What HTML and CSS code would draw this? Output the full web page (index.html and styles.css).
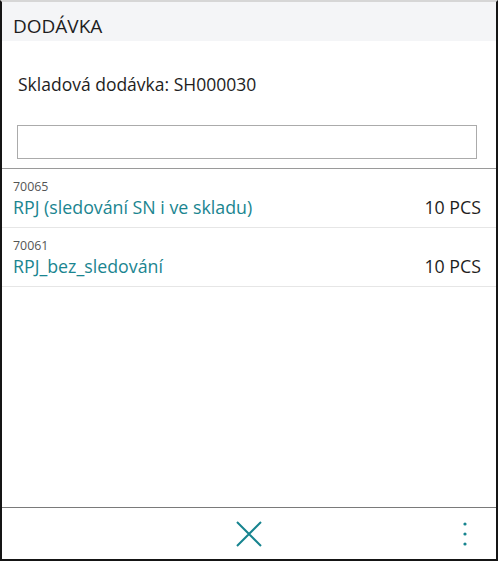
FILE: index.html
```html
<!DOCTYPE html>
<html lang="cs">
<head>
    <meta charset="UTF-8">
    <meta name="viewport" content="width=device-width, initial-scale=1.0">
    <title>Dodávka</title>
    <link rel="stylesheet" href="styles.css">
</head>
<body>
    <div class="frame">
        <!-- Header -->
        <div class="header">DODÁVKA</div>

        <div class="info">Skladová dodávka: SH000030</div>

        <div class="search">
            <input type="text" class="search-input">
        </div>

        <!-- Lines -->
        <div class="lines">
            <div class="line">
                <div class="line-code">70065</div>
                <div class="line-main">
                    <span class="line-name">RPJ (sledování SN i ve skladu)</span>
                    <span class="line-qty">10 PCS</span>
                </div>
            </div>
            <div class="line">
                <div class="line-code">70061</div>
                <div class="line-main">
                    <span class="line-name">RPJ_bez_sledování</span>
                    <span class="line-qty">10 PCS</span>
                </div>
            </div>
        </div>

        <!-- Footer -->
        <div class="footer">
            <button class="icon-btn close-btn" aria-label="Zavřít">
                <svg width="26" height="26" viewBox="0 0 26 26">
                    <path d="M1 1 L25 25 M25 1 L1 25" stroke="#17848f" stroke-width="2" fill="none"/>
                </svg>
            </button>
            <button class="icon-btn more-btn" aria-label="Více">
                <svg width="4" height="24" viewBox="0 0 4 24">
                    <circle cx="2" cy="2" r="1.6" fill="#17848f"/>
                    <circle cx="2" cy="12" r="1.6" fill="#17848f"/>
                    <circle cx="2" cy="22" r="1.6" fill="#17848f"/>
                </svg>
            </button>
        </div>
    </div>
</body>
</html>
```

FILE: styles.css
```css
* {
    margin: 0;
    padding: 0;
    box-sizing: border-box;
}

body {
    font-family: 'Open Sans', sans-serif;
    color: #1e1e1e;
    background: #fff;
}

.frame {
    width: 498px;
    height: 561px;
    border: 2px solid #151515;
    border-top: 2px solid #d6d6d6;
    display: flex;
    flex-direction: column;
}

.header {
    height: 39px;
    background: #f4f5f7;
    padding: 9px 0 0 11px;
    font-size: 19px;
    line-height: 30px;
    color: #1e1e1e;
}

.info {
    margin-top: 31px;
    padding-left: 16px;
    font-size: 17.5px;
    line-height: 24px;
}

.search {
    padding: 29px 19px 9px 15px;
    border-bottom: 1px solid #9a9a9a;
}

.search-input {
    display: block;
    width: 100%;
    height: 34px;
    border: 1px solid #ababab;
    background: #fff;
    outline: none;
}

.lines {
    flex: 1;
}

.line {
    height: 59px;
    padding: 10px 15px 0 11px;
    border-bottom: 1px solid #e6e6e6;
}

.line-code {
    font-size: 12.4px;
    line-height: 16px;
    color: #555;
}

.line-main {
    display: flex;
    justify-content: space-between;
    align-items: center;
    font-size: 17.8px;
    line-height: 25px;
}

.line-name {
    color: #1a8590;
}

.line-qty {
    color: #1e1e1e;
}

.footer {
    height: 52px;
    border-top: 1px solid #7a7a7a;
    position: relative;
    display: flex;
    align-items: center;
    justify-content: center;
}

.icon-btn {
    background: none;
    border: none;
    cursor: pointer;
    display: flex;
}

.more-btn {
    position: absolute;
    right: 29px;
    top: 14px;
}
```
